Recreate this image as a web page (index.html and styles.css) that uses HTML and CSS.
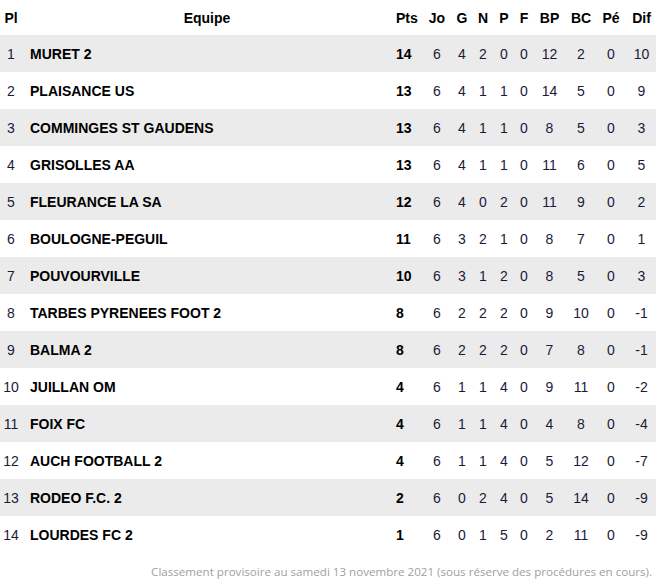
FILE: index.html
```html
<!DOCTYPE html>
<html>
<head>
<meta charset="utf-8">
<link rel="stylesheet" href="styles.css">
</head>
<body>
<div class="wrap">
<table class="standings">
<colgroup>
<col class="c-pl"><col class="c-eq"><col class="c-pts"><col class="c-jo"><col class="c-g"><col class="c-n"><col class="c-p"><col class="c-f"><col class="c-bp"><col class="c-bc"><col class="c-pe"><col class="c-dif">
</colgroup>
<thead>
<tr><th>Pl</th><th>Equipe</th><th class="pts">Pts</th><th>Jo</th><th>G</th><th>N</th><th>P</th><th>F</th><th>BP</th><th>BC</th><th>Pé</th><th>Dif</th></tr>
</thead>
<tbody>
<tr><td>1</td><td class="team">MURET 2</td><td class="pts">14</td><td>6</td><td>4</td><td>2</td><td>0</td><td>0</td><td>12</td><td>2</td><td>0</td><td>10</td></tr>
<tr><td>2</td><td class="team">PLAISANCE US</td><td class="pts">13</td><td>6</td><td>4</td><td>1</td><td>1</td><td>0</td><td>14</td><td>5</td><td>0</td><td>9</td></tr>
<tr><td>3</td><td class="team">COMMINGES ST GAUDENS</td><td class="pts">13</td><td>6</td><td>4</td><td>1</td><td>1</td><td>0</td><td>8</td><td>5</td><td>0</td><td>3</td></tr>
<tr><td>4</td><td class="team">GRISOLLES AA</td><td class="pts">13</td><td>6</td><td>4</td><td>1</td><td>1</td><td>0</td><td>11</td><td>6</td><td>0</td><td>5</td></tr>
<tr><td>5</td><td class="team">FLEURANCE LA SA</td><td class="pts">12</td><td>6</td><td>4</td><td>0</td><td>2</td><td>0</td><td>11</td><td>9</td><td>0</td><td>2</td></tr>
<tr><td>6</td><td class="team">BOULOGNE-PEGUIL</td><td class="pts">11</td><td>6</td><td>3</td><td>2</td><td>1</td><td>0</td><td>8</td><td>7</td><td>0</td><td>1</td></tr>
<tr><td>7</td><td class="team">POUVOURVILLE</td><td class="pts">10</td><td>6</td><td>3</td><td>1</td><td>2</td><td>0</td><td>8</td><td>5</td><td>0</td><td>3</td></tr>
<tr><td>8</td><td class="team">TARBES PYRENEES FOOT 2</td><td class="pts">8</td><td>6</td><td>2</td><td>2</td><td>2</td><td>0</td><td>9</td><td>10</td><td>0</td><td>-1</td></tr>
<tr><td>9</td><td class="team">BALMA 2</td><td class="pts">8</td><td>6</td><td>2</td><td>2</td><td>2</td><td>0</td><td>7</td><td>8</td><td>0</td><td>-1</td></tr>
<tr><td>10</td><td class="team">JUILLAN OM</td><td class="pts">4</td><td>6</td><td>1</td><td>1</td><td>4</td><td>0</td><td>9</td><td>11</td><td>0</td><td>-2</td></tr>
<tr><td>11</td><td class="team">FOIX FC</td><td class="pts">4</td><td>6</td><td>1</td><td>1</td><td>4</td><td>0</td><td>4</td><td>8</td><td>0</td><td>-4</td></tr>
<tr><td>12</td><td class="team">AUCH FOOTBALL 2</td><td class="pts">4</td><td>6</td><td>1</td><td>1</td><td>4</td><td>0</td><td>5</td><td>12</td><td>0</td><td>-7</td></tr>
<tr><td>13</td><td class="team">RODEO F.C. 2</td><td class="pts">2</td><td>6</td><td>0</td><td>2</td><td>4</td><td>0</td><td>5</td><td>14</td><td>0</td><td>-9</td></tr>
<tr><td>14</td><td class="team">LOURDES FC 2</td><td class="pts">1</td><td>6</td><td>0</td><td>1</td><td>5</td><td>0</td><td>2</td><td>11</td><td>0</td><td>-9</td></tr>
</tbody>
</table>
<p class="note">Classement provisoire au samedi 13 novembre 2021 (sous réserve des procédures en cours).</p>
</div>
</body>
</html>
```

FILE: styles.css
```css
html, body {
  margin: 0;
  padding: 0;
  background: #fff;
}
.wrap {
  width: 656px;
}
.standings {
  width: 656px;
  border-collapse: collapse;
  table-layout: fixed;
  font-family: "Liberation Sans", Arial, sans-serif;
  font-size: 14px;
  color: #1a1a3a;
}
.c-pl { width: 22px; }
.c-eq { width: 370px; }
.c-pts { width: 32px; }
.c-jo { width: 26px; }
.c-g { width: 24px; }
.c-n { width: 18px; }
.c-p { width: 24px; }
.c-f { width: 16px; }
.c-bp { width: 35px; }
.c-bc { width: 28px; }
.c-pe { width: 32px; }
.c-dif { width: 29px; }
.standings th {
  height: 35px;
  padding: 0;
  font-weight: bold;
  color: #000;
  text-align: center;
  vertical-align: middle;
}
.standings td {
  height: 37px;
  padding: 0;
  text-align: center;
  vertical-align: middle;
}
.standings tbody tr:nth-child(odd) {
  background: #ebebeb;
}
.standings td.team {
  text-align: left;
  padding-left: 8px;
  font-weight: bold;
  color: #000;
}
.standings .pts {
  text-align: left;
  padding-left: 4px;
}
.standings td.pts {
  font-weight: bold;
  color: #000;
}
.note {
  margin: 11px 4px 0 0;
  text-align: right;
  font-family: "Open Sans", sans-serif;
  font-size: 11.6px;
  color: #a0a0a0;
}
```
